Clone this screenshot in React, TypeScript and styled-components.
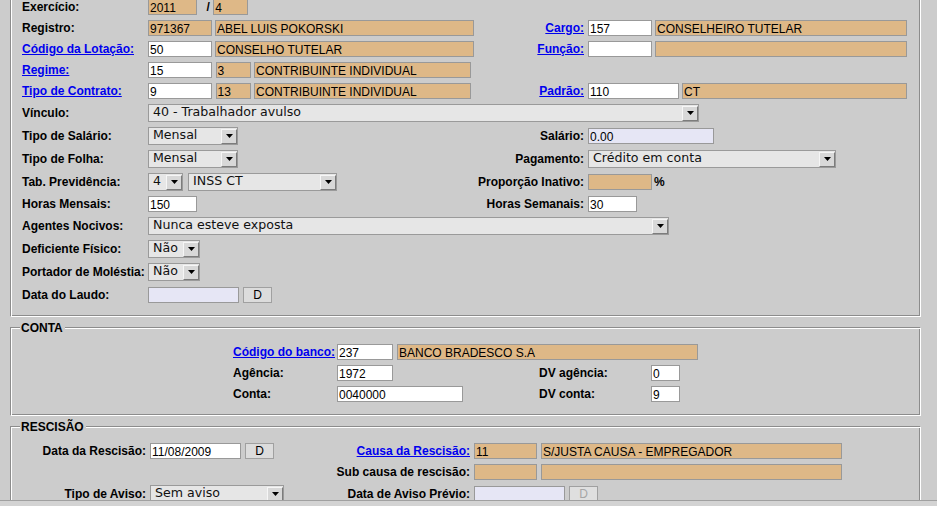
import React from 'react';
import styled, { createGlobalStyle } from 'styled-components';

type Tone = 'white' | 'tan' | 'lav';

const toneColor: Record<Tone, string> = {
    white: '#ffffff',
    tan: '#deb887',
    lav: '#e6e6f5',
};

const GlobalStyle = createGlobalStyle`
    html, body {
        margin: 0;
        padding: 0;
        background: #cccccc;
    }

    body {
        font-family: "Liberation Sans", Arial, sans-serif;
        color: #000;
        overflow: hidden;
    }
`;

const Viewport = styled.div`
    height: 500px;
    overflow: hidden;
`;

const Page = styled.div`
    width: 911px;
    margin: -4px 0 0 10px;
    display: flex;
    flex-direction: column;
    gap: 10px;
`;

const BottomEdge = styled.div`
    height: 5px;
    border-top: 1px solid #a0a0a0;
    background: #d3d3d3;
`;

const Fieldset = styled.div<{ $open?: boolean }>`
    position: relative;
    border: 1px solid;
    border-color: #8c8c8c #ffffff #ffffff #8c8c8c;
    box-shadow: inset 1px 1px 0 #ffffff, inset -1px -1px 0 #8c8c8c;
    padding: 13px 0 11px 11px;

    ${(p) => p.$open && `
        border-top: none;
        box-shadow: inset 1px 0 0 #ffffff, inset -1px -1px 0 #8c8c8c;
        padding-top: 0;
        padding-bottom: 10px;
    `}
`;

const Legend = styled.span`
    position: absolute;
    top: -7px;
    left: 9px;
    padding: 0 2px 0 1px;
    background: #cccccc;
    font-size: 12px;
    font-weight: bold;
    line-height: 14px;
`;

const RowBase = styled.div<{ $h?: number }>`
    display: grid;
    align-items: center;
    height: ${(p) => p.$h ?? 21}px;
`;

const TopRow = styled(RowBase)`
    grid-template-columns: 126px 328px 112px 1fr;
`;

const BankRow = styled(RowBase)`
    grid-template-columns: 211px 104px 202px 112px 1fr;
`;

const EndRow = styled(RowBase)`
    grid-template-columns: 128px 150px 174px 1fr;
`;

const Label = styled.span<{ $right?: boolean; $col?: string }>`
    grid-column: ${(p) => p.$col ?? 'auto'};
    font-size: 12px;
    font-weight: bold;
    line-height: 14px;
    padding-top: 1px;
    white-space: nowrap;
    text-align: ${(p) => (p.$right ? 'right' : 'left')};
    padding-right: ${(p) => (p.$right ? '4px' : '0')};
`;

const LinkLabel = styled.a<{ $right?: boolean; $col?: string }>`
    grid-column: ${(p) => p.$col ?? 'auto'};
    font-size: 12px;
    font-weight: bold;
    line-height: 14px;
    padding-top: 1px;
    white-space: nowrap;
    color: #0000ee;
    text-decoration: underline;
    cursor: pointer;
    text-align: ${(p) => (p.$right ? 'right' : 'left')};
    padding-right: ${(p) => (p.$right ? '4px' : '0')};
`;

const Cell = styled.div<{ $gap?: number; $col?: string }>`
    grid-column: ${(p) => p.$col ?? 'auto'};
    display: flex;
    align-items: center;
    gap: ${(p) => p.$gap ?? 3}px;
`;

const TextInput = styled.input<{ $w: number; $tone?: Tone }>`
    box-sizing: border-box;
    width: ${(p) => p.$w}px;
    height: 16px;
    margin: 0;
    padding: 2px 1px 0 1px;
    border: 1px solid #999999;
    border-radius: 0;
    background: ${(p) => toneColor[p.$tone ?? 'white']};
    font-family: "Liberation Sans", Arial, sans-serif;
    font-size: 12px;
    color: #000;
    outline: none;
`;

const Slash = styled.span`
    font-size: 12px;
    font-weight: bold;
    padding: 1px 3.5px 0 9.5px;
`;

const Percent = styled.span`
    font-size: 12px;
    font-weight: bold;
    padding: 1px 0 0 2px;
`;

const DateButton = styled.button`
    box-sizing: border-box;
    width: 29px;
    height: 16px;
    margin: 0;
    padding: 0;
    border: 1px solid #a0a0a0;
    border-radius: 0;
    background: #dcdcdc;
    font-family: "Liberation Sans", Arial, sans-serif;
    font-size: 12px;
    line-height: 14px;
    color: #000;

    &:disabled {
        color: #a6a6a6;
        background: #dfdfdf;
    }
`;

const SelectBox = styled.div<{ $w: number }>`
    box-sizing: border-box;
    width: ${(p) => p.$w}px;
    height: 18px;
    border: 1px solid #9a9a9a;
    background: #e6e6e6;
    display: flex;
    align-items: flex-end;
`;

const SelectValue = styled.span`
    flex: 1;
    align-self: flex-start;
    padding-left: 4px;
    font-family: "DejaVu Sans", sans-serif;
    font-size: 12.6px;
    line-height: 14px;
    color: #111;
    white-space: nowrap;
    overflow: hidden;
`;

const ArrowButton = styled.span`
    box-sizing: border-box;
    width: 16px;
    height: 15px;
    border-top: 1px solid #f6f6f6;
    border-left: 1px solid #f6f6f6;
    border-right: 1px solid #7c7c7c;
    border-bottom: 1px solid #7c7c7c;
    background: #d8d8d8;
    display: flex;
    align-items: center;
    justify-content: center;
`;

const Select: React.FC<{ w: number; value: string }> = ({ w, value }) => (
    <SelectBox $w={w}>
        <SelectValue>{value}</SelectValue>
        <ArrowButton>
            <svg width="7" height="4" viewBox="0 0 7 4">
                <path d="M0 0h7L3.5 4z" fill="#000" />
            </svg>
        </ArrowButton>
    </SelectBox>
);

const App: React.FC = () => {
    return (
        <>
            <GlobalStyle />
            <Viewport>
                <Page>
                    <Fieldset $open>
                        <TopRow>
                            <Label>Exercício:</Label>
                            <Cell $gap={0}>
                                <TextInput $w={49} $tone="tan" value="2011" readOnly />
                                <Slash>/</Slash>
                                <TextInput $w={35} $tone="tan" value="4" readOnly />
                            </Cell>
                        </TopRow>
                        <TopRow>
                            <Label>Registro:</Label>
                            <Cell>
                                <TextInput $w={64} $tone="tan" value="971367" readOnly />
                                <TextInput $w={259} $tone="tan" value="ABEL LUIS POKORSKI" readOnly />
                            </Cell>
                            <LinkLabel $right>Cargo:</LinkLabel>
                            <Cell>
                                <TextInput $w={64} value="157" readOnly />
                                <TextInput $w={252} $tone="tan" value="CONSELHEIRO TUTELAR" readOnly />
                            </Cell>
                        </TopRow>
                        <TopRow>
                            <LinkLabel>Código da Lotação:</LinkLabel>
                            <Cell>
                                <TextInput $w={64} value="50" readOnly />
                                <TextInput $w={259} $tone="tan" value="CONSELHO TUTELAR" readOnly />
                            </Cell>
                            <LinkLabel $right>Função:</LinkLabel>
                            <Cell>
                                <TextInput $w={64} value="" readOnly />
                                <TextInput $w={252} $tone="tan" value="" readOnly />
                            </Cell>
                        </TopRow>
                        <TopRow>
                            <LinkLabel>Regime:</LinkLabel>
                            <Cell $gap={3.5}>
                                <TextInput $w={64} value="15" readOnly />
                                <TextInput $w={35} $tone="tan" value="3" readOnly />
                                <TextInput $w={217} $tone="tan" value="CONTRIBUINTE INDIVIDUAL" readOnly />
                            </Cell>
                        </TopRow>
                        <TopRow>
                            <LinkLabel>Tipo de Contrato:</LinkLabel>
                            <Cell $gap={3.5}>
                                <TextInput $w={64} value="9" readOnly />
                                <TextInput $w={35} $tone="tan" value="13" readOnly />
                                <TextInput $w={217} $tone="tan" value="CONTRIBUINTE INDIVIDUAL" readOnly />
                            </Cell>
                            <LinkLabel $right>Padrão:</LinkLabel>
                            <Cell>
                                <TextInput $w={91} value="110" readOnly />
                                <TextInput $w={225} $tone="tan" value="CT" readOnly />
                            </Cell>
                        </TopRow>
                        <TopRow $h={23}>
                            <Label>Vínculo:</Label>
                            <Cell $col="2 / 5">
                                <Select w={551} value="40 - Trabalhador avulso" />
                            </Cell>
                        </TopRow>
                        <TopRow $h={23}>
                            <Label>Tipo de Salário:</Label>
                            <Cell>
                                <Select w={90} value="Mensal" />
                            </Cell>
                            <Label $right>Salário:</Label>
                            <Cell>
                                <TextInput $w={126} $tone="lav" value="0.00" readOnly />
                            </Cell>
                        </TopRow>
                        <TopRow $h={23}>
                            <Label>Tipo de Folha:</Label>
                            <Cell>
                                <Select w={90} value="Mensal" />
                            </Cell>
                            <Label $right>Pagamento:</Label>
                            <Cell>
                                <Select w={248} value="Crédito em conta" />
                            </Cell>
                        </TopRow>
                        <TopRow $h={23}>
                            <Label>Tab. Previdência:</Label>
                            <Cell $gap={5}>
                                <Select w={35} value="4" />
                                <Select w={149} value="INSS CT" />
                            </Cell>
                            <Label $right>Proporção Inativo:</Label>
                            <Cell $gap={0}>
                                <TextInput $w={64} $tone="tan" value="" readOnly />
                                <Percent>%</Percent>
                            </Cell>
                        </TopRow>
                        <TopRow>
                            <Label>Horas Mensais:</Label>
                            <Cell>
                                <TextInput $w={49} value="150" readOnly />
                            </Cell>
                            <Label $right>Horas Semanais:</Label>
                            <Cell>
                                <TextInput $w={49} value="30" readOnly />
                            </Cell>
                        </TopRow>
                        <TopRow $h={23}>
                            <Label>Agentes Nocivos:</Label>
                            <Cell $col="2 / 5">
                                <Select w={521} value="Nunca esteve exposta" />
                            </Cell>
                        </TopRow>
                        <TopRow $h={23}>
                            <Label>Deficiente Físico:</Label>
                            <Cell>
                                <Select w={52} value="Não" />
                            </Cell>
                        </TopRow>
                        <TopRow $h={23}>
                            <Label>Portador de Moléstia:</Label>
                            <Cell>
                                <Select w={52} value="Não" />
                            </Cell>
                        </TopRow>
                        <TopRow $h={23}>
                            <Label>Data do Laudo:</Label>
                            <Cell $gap={4}>
                                <TextInput $w={91} $tone="lav" value="" readOnly />
                                <DateButton>D</DateButton>
                            </Cell>
                        </TopRow>
                    </Fieldset>

                    <Fieldset>
                        <Legend>CONTA</Legend>
                        <BankRow>
                            <LinkLabel $col="2">Código do banco:</LinkLabel>
                            <Cell $col="3 / 6" $gap={4}>
                                <TextInput $w={56} value="237" readOnly />
                                <TextInput $w={301} $tone="tan" value="BANCO BRADESCO S.A" readOnly />
                            </Cell>
                        </BankRow>
                        <BankRow>
                            <Label $col="2">Agência:</Label>
                            <Cell>
                                <TextInput $w={56} value="1972" readOnly />
                            </Cell>
                            <Label>DV agência:</Label>
                            <Cell>
                                <TextInput $w={29} value="0" readOnly />
                            </Cell>
                        </BankRow>
                        <BankRow>
                            <Label $col="2">Conta:</Label>
                            <Cell>
                                <TextInput $w={126} value="0040000" readOnly />
                            </Cell>
                            <Label>DV conta:</Label>
                            <Cell>
                                <TextInput $w={29} value="9" readOnly />
                            </Cell>
                        </BankRow>
                    </Fieldset>

                    <Fieldset>
                        <Legend>RESCISÃO</Legend>
                        <EndRow>
                            <Label $right>Data da Rescisão:</Label>
                            <Cell $gap={4}>
                                <TextInput $w={91} value="11/08/2009" readOnly />
                                <DateButton>D</DateButton>
                            </Cell>
                            <LinkLabel $right>Causa da Rescisão:</LinkLabel>
                            <Cell $gap={4}>
                                <TextInput $w={63} $tone="tan" value="11" readOnly />
                                <TextInput $w={301} $tone="tan" value="S/JUSTA CAUSA - EMPREGADOR" readOnly />
                            </Cell>
                        </EndRow>
                        <EndRow>
                            <Label $right $col="3">Sub causa de rescisão:</Label>
                            <Cell $gap={4}>
                                <TextInput $w={63} $tone="tan" value="" readOnly />
                                <TextInput $w={301} $tone="tan" value="" readOnly />
                            </Cell>
                        </EndRow>
                        <EndRow $h={23}>
                            <Label $right>Tipo de Aviso:</Label>
                            <Cell>
                                <Select w={134} value="Sem aviso" />
                            </Cell>
                            <Label $right>Data de Aviso Prévio:</Label>
                            <Cell $gap={4}>
                                <TextInput $w={91} $tone="lav" value="" readOnly />
                                <DateButton disabled>D</DateButton>
                            </Cell>
                        </EndRow>
                    </Fieldset>
                </Page>
            </Viewport>
            <BottomEdge />
        </>
    );
};

export default App;
